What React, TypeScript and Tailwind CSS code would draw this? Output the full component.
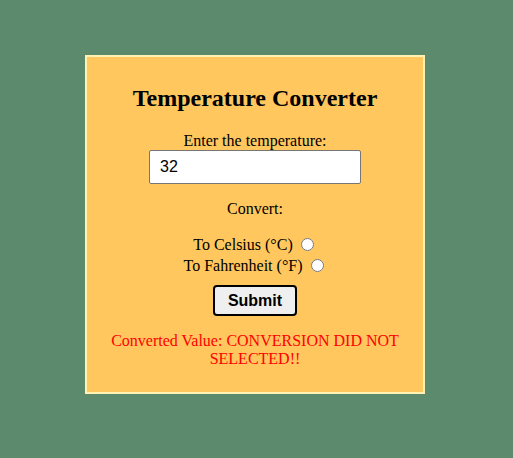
export default function App() {
  return (
    <div className="min-h-[458px] bg-[#5b8a6c] pt-[55px] font-['Liberation_Serif',serif] text-[16px] text-black">
      <div className="ml-[85px] w-[340px] border-2 border-[#fff2b3] bg-[#ffc75d] px-5 pb-6 pt-[28px] text-center">
        <h2 className="text-[24px] font-bold leading-[27px]">Temperature Converter</h2>

        <div className="mt-5 flex flex-col items-center">
          <label className="leading-[18px]">Enter the temperature:</label>
          <input
            type="text"
            defaultValue="32"
            className="h-[34px] w-[212px] rounded-[2px] border border-[#767676] bg-white px-[10px] font-['Liberation_Sans',sans-serif] text-[16px] outline-none"
          />
        </div>

        <p className="mt-4 leading-[18px]">Convert:</p>

        <div className="mt-4 leading-[21px]">
          <div className="flex items-center justify-center">
            <span>To Celsius (°C)</span>
            <input type="radio" name="unit" className="ml-[8px] mr-[3px] h-[13px] w-[13px]" />
          </div>
          <div className="flex items-center justify-center">
            <span>To Fahrenheit (°F)</span>
            <input type="radio" name="unit" className="ml-[8px] mr-[3px] h-[13px] w-[13px]" />
          </div>
        </div>

        <button className="mt-[9px] h-[31px] w-[84px] rounded-[4px] border-2 border-black bg-[#efefef] font-['Liberation_Sans',sans-serif] text-[16px] font-bold">
          Submit
        </button>

        <p className="mt-4 leading-[18px] text-[#ff0000]">
          Converted Value: CONVERSION DID NOT SELECTED!!
        </p>
      </div>
    </div>
  )
}
